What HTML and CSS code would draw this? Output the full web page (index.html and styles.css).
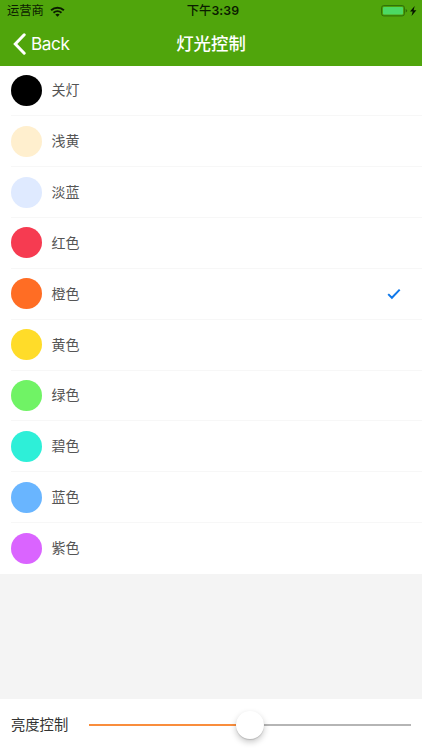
FILE: index.html
```html
<!DOCTYPE html>
<html lang="zh-CN">
<head>
<meta charset="utf-8">
<title>灯光控制</title>
<link rel="stylesheet" href="styles.css">
</head>
<body>
<div class="screen">
  <header class="header">
    <div class="status">
      <div class="carrier">
        <span>运营商</span>
        <svg class="wifi" width="15" height="11" viewBox="0 0 15 11">
          <g fill="none" stroke="#0b1c00" stroke-width="1.9">
            <path d="M1.1 4.3C4.8.9 10.2.9 13.9 4.3"/>
            <path d="M3.5 6.8C5.9 4.8 9.1 4.8 11.5 6.8"/>
          </g>
          <path d="M7.5 10.8L5.3 8.6Q7.5 7 9.7 8.6Z" fill="#0b1c00"/>
        </svg>
      </div>
      <div class="time">下午<b>3:39</b></div>
      <svg class="battery" width="37" height="12" viewBox="0 0 37 12">
        <rect x=".6" y=".6" width="22.8" height="10.3" rx="2.2" fill="none" stroke="#2f6d09" stroke-width="1"/>
        <rect x="2" y="2" width="20" height="7.6" rx="1" fill="#4cd964"/>
        <path d="M24.7 4v3.6q1.5-.6 1.5-1.8T24.7 4z" fill="#2f6d09"/>
        <path d="M33.7 1L29 6.5h2.7L30.5 11 35.4 5.2h-2.8z" fill="#061300"/>
      </svg>
    </div>
    <nav class="nav">
      <div class="back">
        <svg width="13" height="22" viewBox="0 0 13 22"><path d="M11.2 1.8L2.3 11l8.9 9.2" fill="none" stroke="#fff" stroke-width="3" stroke-linecap="round"/></svg>
        <span>Back</span>
      </div>
      <h1 class="title">灯光控制</h1>
    </nav>
  </header>
  <ul class="list">
    <li class="row"><i class="dot black"></i><span class="label">关灯</span></li>
    <li class="row"><i class="dot cream"></i><span class="label">浅黄</span></li>
    <li class="row"><i class="dot pale"></i><span class="label">淡蓝</span></li>
    <li class="row"><i class="dot red"></i><span class="label">红色</span></li>
    <li class="row"><i class="dot orange"></i><span class="label">橙色</span>
      <svg class="check" width="14" height="12" viewBox="0 0 14 12"><path d="M1.2 6.1l3.7 3.7 7.8-8.2" fill="none" stroke="#0f78ea" stroke-width="2"/></svg></li>
    <li class="row"><i class="dot yellow"></i><span class="label">黄色</span></li>
    <li class="row"><i class="dot green"></i><span class="label">绿色</span></li>
    <li class="row"><i class="dot teal"></i><span class="label">碧色</span></li>
    <li class="row"><i class="dot blue"></i><span class="label">蓝色</span></li>
    <li class="row"><i class="dot purple"></i><span class="label">紫色</span></li>
  </ul>
  <footer class="footer">
    <span class="brightness">亮度控制</span>
    <div class="slider"><i class="thumb"></i></div>
  </footer>
</div>
</body>
</html>
```
FILE: styles.css
```css
* { box-sizing: border-box; }
body {
  margin: 0;
  font-family: Inter, "Noto Sans CJK SC", sans-serif;
}
.screen {
  width: 422px;
  height: 750px;
  display: flex;
  flex-direction: column;
  background: #f4f4f4;
  overflow: hidden;
}
.header {
  height: 65.5px;
  flex: none;
  background: #50a50c;
}
.status {
  height: 22px;
  display: grid;
  grid-template-columns: 1fr auto 1fr;
  align-items: center;
  padding: 0 4px 0 7px;
  font-size: 12.3px;
  line-height: 20px;
  color: #0b1c00;
}
.carrier { display: flex; align-items: center; gap: 6px; }
.time { padding-left: 1px; font-weight: 500; }
.time b { font-weight: 600; letter-spacing: 0.1px; }
.battery { justify-self: end; }
.nav {
  height: 43px;
  display: grid;
  grid-template-columns: 1fr auto 1fr;
  align-items: center;
  padding: 0 13px;
  color: #fff;
}
.back {
  display: flex;
  align-items: center;
  gap: 5px;
  font-family: Inter, sans-serif;
  font-size: 17.2px;
  letter-spacing: -0.4px;
}
.title {
  margin: 0;
  font-size: 17.4px;
  line-height: 26px;
  font-weight: 500;
}
.list {
  margin: 0;
  padding: 0;
  list-style: none;
  background: #fff;
}
.row {
  height: 50.85px;
  margin-left: 10.5px;
  display: flex;
  align-items: center;
  border-bottom: 1px solid #f7f7f7;
}
.row:last-child { border-bottom-color: transparent; }
.dot { width: 31px; height: 31px; border-radius: 50%; }
.label {
  margin-left: 10px;
  font-size: 14px;
  line-height: 20px;
  color: #555;
}
.check { margin-left: auto; margin-right: 21.5px; }
.black { background: #000; }
.cream { background: #ffefce; }
.pale { background: #dfeaff; }
.red { background: #f63b51; }
.orange { background: #ff6d24; }
.yellow { background: #ffdc29; }
.green { background: #70f365; }
.teal { background: #2eefd8; }
.blue { background: #69b5ff; }
.purple { background: #da64ff; }
.footer {
  height: 51px;
  margin-top: auto;
  padding: 0 11px;
  display: flex;
  align-items: center;
  background: #fff;
}
.brightness {
  width: 78px;
  font-size: 14.3px;
  line-height: 20px;
  color: #333;
}
.slider {
  flex: 1;
  height: 28px;
  display: flex;
  align-items: center;
  justify-content: center;
  background: linear-gradient(90deg, #f98d3c 50%, #b5b5b5 50%) center / 100% 2px no-repeat;
}
.thumb {
  width: 28px;
  height: 28px;
  border-radius: 50%;
  background: #fff;
  box-shadow: 0 3px 6px rgba(0, 0, 0, .22), 0 1px 1px rgba(0, 0, 0, .14);
}
```
